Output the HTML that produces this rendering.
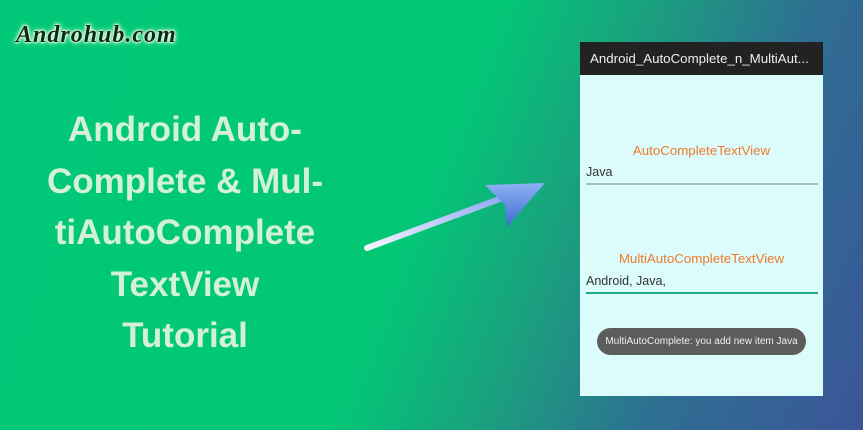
<!DOCTYPE html>
<html><head><style>
body{margin:0;width:863px;height:430px;overflow:hidden;position:relative;font-family:"Liberation Sans",sans-serif;
background:linear-gradient(112deg,#00c878 0%,#02c876 48%,#1aa07e 63%,#2e6f92 79%,#3b5598 100%);}
.logo{position:absolute;left:16px;top:22px;font:italic bold 24px "Liberation Serif",serif;color:#0b2a18;letter-spacing:1px;
text-shadow:0 0 1px #fff,0 0 2px #fff,0 0 3px #fff,0 0 5px #bfb,0 0 7px #9f9;}
.title{position:absolute;left:10px;top:104px;width:350px;text-align:center;color:#d3f0d8;font-size:35px;line-height:51.5px;font-weight:bold;}
.phone{position:absolute;left:580px;top:42px;width:243px;height:354px;background:#dcfcfb;}
.bar{height:33px;background:#222;color:#eee;font-size:13.3px;line-height:33px;padding-left:10px;white-space:nowrap;}
.lbl{position:absolute;width:243px;text-align:center;color:#f07a2a;font-size:13.3px;}
.inp{position:absolute;left:6px;width:232px;font-size:12.5px;color:#333;}
.tt{position:absolute;left:17px;top:286px;width:209px;height:27px;border-radius:14px;background:#5c5c5c;color:#eee;font-size:10px;line-height:27px;text-align:center;}
</style></head><body>
<div class="logo">Androhub.com</div>
<div class="title">Android Auto-<br>Complete &amp; Mul-<br>tiAutoComplete<br>TextView<br>Tutorial</div>
<svg style="position:absolute;left:355px;top:175px" width="200" height="85">
<defs><linearGradient id="g" x1="0" y1="1" x2="1" y2="0"><stop offset="0" stop-color="#f4f4ff"/><stop offset="1" stop-color="#8ea8f0"/></linearGradient>
<linearGradient id="h" x1="0" y1="0" x2="0" y2="1"><stop offset="0" stop-color="#8fb0f5"/><stop offset="1" stop-color="#3a6fd0"/></linearGradient></defs>
<line x1="12" y1="73" x2="150" y2="22" stroke="url(#g)" stroke-width="6" stroke-linecap="round"/>
<path d="M130 10 L190 8 L152 52 L150 30 Z" fill="url(#h)"/>
</svg>
<div class="phone">
<div class="bar">Android_AutoComplete_n_MultiAut...</div>
<div class="lbl" style="top:101px">AutoCompleteTextView</div>
<div class="inp" style="top:123px;padding-bottom:4px;border-bottom:2px solid #9fc3c3">Java</div>
<div class="lbl" style="top:209px">MultiAutoCompleteTextView</div>
<div class="inp" style="top:232px;padding-bottom:4px;border-bottom:2px solid #1fa88e">Android, Java,</div>
<div class="tt">MultiAutoComplete: you add new item Java</div>
</div>
</body></html>
